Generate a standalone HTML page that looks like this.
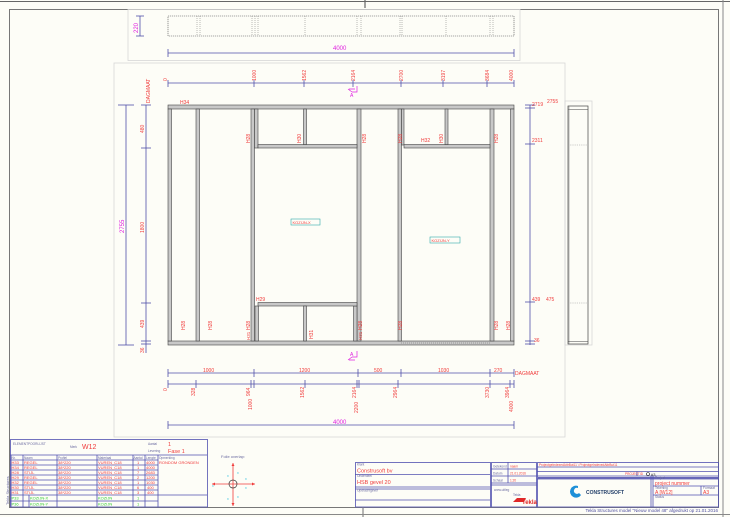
<!DOCTYPE html>
<html><head><meta charset="utf-8"><style>
html,body{margin:0;padding:0;background:#fdfdf7;}
svg{display:block;font-family:"Liberation Sans",sans-serif;}
.r{fill:#f03c3c;font-size:5px;}
.m{fill:#e020e0;font-size:6px;}
.d{stroke:#5050a8;stroke-width:0.8;fill:none;}
.t{stroke:#5050b0;stroke-width:0.8;fill:none;}
.st{fill:#c8c8c8;stroke:#444;stroke-width:0.6;}
.s{fill:#6a6aa0;font-size:3.2px;}
.g{fill:#3c3;font-size:4px;}
.rs{fill:#f03c3c;font-size:4px;}
</style></head><body>
<svg width="730" height="517" viewBox="0 0 730 517" xmlns="http://www.w3.org/2000/svg">
<rect width="730" height="517" fill="#fdfdf7"/>
<!-- outer frame -->
<line x1="0" y1="1.5" x2="730" y2="1.5" stroke="#666" stroke-width="1"/>
<line x1="365" y1="0" x2="365" y2="8" stroke="#666" stroke-width="1.2"/>
<rect x="9.5" y="9.5" width="709" height="498" fill="none" stroke="#777" stroke-width="1"/>
<line x1="0" y1="514.5" x2="730" y2="514.5" stroke="#888" stroke-width="1"/>
<line x1="363" y1="507" x2="363" y2="517" stroke="#888" stroke-width="1.2"/>
<line x1="723" y1="0" x2="723" y2="517" stroke="#888" stroke-width="1"/>
<!-- panels -->
<rect x="128" y="9.5" width="392" height="51" fill="none" stroke="#d6d6d6" stroke-width="0.8"/>
<rect x="114" y="63" width="451" height="374" fill="none" stroke="#d6d6d6" stroke-width="0.8"/>
<rect x="565" y="101" width="27" height="244" fill="none" stroke="#d6d6d6" stroke-width="0.8"/>

<!-- top view -->
<rect x="168" y="16" width="346" height="20" fill="none" stroke="#555" stroke-width="0.6" stroke-dasharray="1.2,0.8"/>
<g stroke="#777" stroke-width="0.5" stroke-dasharray="1,1">
<line x1="197" y1="16" x2="197" y2="36"/><line x1="200" y1="16" x2="200" y2="36"/>
<line x1="252" y1="16" x2="252" y2="36"/><line x1="255" y1="16" x2="255" y2="36"/><line x1="258" y1="16" x2="258" y2="36"/>
<line x1="305" y1="16" x2="305" y2="36"/><line x1="357" y1="16" x2="357" y2="36"/><line x1="361" y1="16" x2="361" y2="36"/>
<line x1="400" y1="16" x2="400" y2="36"/><line x1="402" y1="16" x2="402" y2="36"/><line x1="446" y1="16" x2="446" y2="36"/>
<line x1="490" y1="16" x2="490" y2="36"/><line x1="493" y1="16" x2="493" y2="36"/>
</g>
<g class="d"><line x1="140" y1="16" x2="140" y2="36"/><line x1="136" y1="16" x2="144" y2="16"/><line x1="136" y1="36" x2="144" y2="36"/>
<line x1="168" y1="53" x2="514" y2="53"/><line x1="168" y1="49" x2="168" y2="57"/><line x1="514" y1="49" x2="514" y2="57"/></g>
<text class="m" transform="translate(138,33) rotate(-90)">220</text>
<text class="m" x="333" y="50">4000</text>

<!-- top dims -->
<g class="d"><line x1="168" y1="83" x2="514" y2="83"/>
<line x1="168" y1="80" x2="168" y2="87"/><line x1="254" y1="80" x2="254" y2="87"/><line x1="304" y1="80" x2="304" y2="87"/><line x1="353" y1="80" x2="353" y2="87"/><line x1="401" y1="80" x2="401" y2="87"/><line x1="443" y1="80" x2="443" y2="87"/><line x1="487" y1="80" x2="487" y2="87"/><line x1="514" y1="80" x2="514" y2="87"/></g>
<g class="r">
<text transform="translate(167,81) rotate(-90)">0</text>
<text transform="translate(256,81) rotate(-90)">1000</text>
<text transform="translate(306,81) rotate(-90)">1562</text>
<text transform="translate(355,81) rotate(-90)">2164</text>
<text transform="translate(403,81) rotate(-90)">2700</text>
<text transform="translate(445,81) rotate(-90)">3197</text>
<text transform="translate(489,81) rotate(-90)">3684</text>
<text transform="translate(513,81) rotate(-90)">4000</text>
</g>
<path d="M357 86 L357 92 L352 92 M352 92 L348 89 M355 89 L349 89" stroke="#e020e0" stroke-width="0.7" fill="none"/>
<text class="m" x="350" y="97" style="font-size:5px">A</text>
<path d="M357 351 L357 357 L352 357 M352 357 L348 360 M355 360 L349 360" stroke="#e020e0" stroke-width="0.7" fill="none"/>
<text class="m" x="350" y="356" style="font-size:5px">A</text>

<!-- left dims -->
<g class="d"><line x1="126" y1="105" x2="126" y2="345"/><line x1="118" y1="105" x2="134" y2="105"/><line x1="118" y1="345" x2="134" y2="345"/>
<line x1="146" y1="105" x2="146" y2="353"/><line x1="141" y1="105" x2="151" y2="105"/><line x1="141" y1="148" x2="151" y2="148"/><line x1="141" y1="303" x2="151" y2="303"/><line x1="141" y1="341" x2="151" y2="341"/><line x1="141" y1="344" x2="151" y2="344"/></g>
<text class="m" transform="translate(124,233) rotate(-90)">2755</text>
<g class="r"><text transform="translate(150,103) rotate(-90)">DAGMAAT</text>
<text transform="translate(144,133) rotate(-90)">480</text>
<text transform="translate(144,233) rotate(-90)">1800</text>
<text transform="translate(144,328) rotate(-90)">439</text>
<text transform="translate(144,353) rotate(-90)">36</text></g>

<!-- right dims -->
<g class="d"><line x1="530" y1="105" x2="530" y2="345"/><line x1="525" y1="105" x2="535" y2="105"/><line x1="525" y1="108" x2="535" y2="108"/><line x1="525" y1="144" x2="535" y2="144"/><line x1="525" y1="302" x2="535" y2="302"/><line x1="525" y1="341" x2="535" y2="341"/><line x1="525" y1="344" x2="535" y2="344"/></g>
<g class="r"><text x="532" y="106">2719</text><text x="547" y="103">2755</text><text x="532" y="142">2311</text><text x="532" y="301">439</text><text x="546" y="301">475</text><text x="534" y="342">36</text></g>

<!-- frame members -->
<rect class="st" x="168" y="105" width="346" height="4"/>
<rect class="st" x="168" y="341" width="346" height="4"/>
<line x1="401" y1="343" x2="490" y2="343" stroke="#666" stroke-width="0.5" stroke-dasharray="1,1"/>
<g>
<rect class="st" x="168" y="109" width="3.5" height="232"/>
<rect class="st" x="196" y="109" width="3.5" height="232"/>
<rect class="st" x="251" y="109" width="3.5" height="232"/>
<rect class="st" x="254.5" y="109" width="3.5" height="39"/>
<rect class="st" x="255" y="306" width="3.5" height="35"/>
<rect class="st" x="357" y="109" width="4" height="232"/>
<rect class="st" x="353.5" y="306" width="3.5" height="35"/>
<rect class="st" x="398" y="109" width="3.5" height="232"/>
<rect class="st" x="401.5" y="109" width="2.5" height="36"/>
<rect class="st" x="490" y="109" width="4" height="232"/>
<rect class="st" x="510.5" y="109" width="3.5" height="232"/>
<rect class="st" x="258" y="144.5" width="99" height="3.5"/>
<rect class="st" x="404" y="144.5" width="86" height="3.5"/>
<rect class="st" x="258" y="302.5" width="99" height="3.5"/>
<rect class="st" x="303.5" y="109" width="3" height="35.5"/>
<rect class="st" x="445" y="109" width="3" height="35.5"/>
<rect class="st" x="303.5" y="306" width="3" height="35"/>
</g>
<g class="r">
<text x="180" y="104">H34</text>
<text x="256" y="301">H29</text>
<text x="421" y="142">H32</text>
<text transform="translate(185,330) rotate(-90)">H28</text>
<text transform="translate(212,330) rotate(-90)">H28</text>
<text transform="translate(250,330) rotate(-90)">H28</text>
<text transform="translate(250,340) rotate(-90)" style="font-size:4.5px">H31</text>
<text transform="translate(250,143) rotate(-90)">H28</text>
<text transform="translate(301,143) rotate(-90)">H30</text>
<text transform="translate(313,339) rotate(-90)">H31</text>
<text transform="translate(366,143) rotate(-90)">H28</text>
<text transform="translate(362,330) rotate(-90)">H28</text>
<text transform="translate(362,340) rotate(-90)" style="font-size:4.5px">H31</text>
<text transform="translate(402,143) rotate(-90)">H28</text>
<text transform="translate(402,330) rotate(-90)">H28</text>
<text transform="translate(443,143) rotate(-90)">H30</text>
<text transform="translate(498,143) rotate(-90)">H28</text>
<text transform="translate(498,330) rotate(-90)">H28</text>
<text transform="translate(510,330) rotate(-90)">H28</text>
</g>
<rect x="291" y="219" width="29" height="6" fill="none" stroke="#3aa" stroke-width="0.6"/>
<text class="rs" x="292.5" y="224">KOZIJN-X</text>
<rect x="430" y="237" width="30" height="6" fill="none" stroke="#3aa" stroke-width="0.6"/>
<text class="rs" x="431.5" y="242">KOZIJN-Y</text>

<!-- side view -->
<rect x="568" y="106" width="20" height="238" fill="none" stroke="#444" stroke-width="0.7"/>
<line x1="568" y1="109.5" x2="588" y2="109.5" stroke="#444" stroke-width="0.6"/>
<line x1="569" y1="106" x2="569" y2="344" stroke="#888" stroke-width="0.6"/>
<line x1="568" y1="145" x2="588" y2="145" stroke="#999" stroke-width="0.5" stroke-dasharray="1.2,1"/>
<line x1="568" y1="303" x2="588" y2="303" stroke="#999" stroke-width="0.5" stroke-dasharray="1.2,1"/>
<line x1="568" y1="341.5" x2="588" y2="341.5" stroke="#444" stroke-width="0.5"/>

<!-- bottom dims -->
<g class="d">
<line x1="168" y1="373" x2="514" y2="373"/>
<line x1="168" y1="369" x2="168" y2="377"/><line x1="254" y1="369" x2="254" y2="377"/><line x1="358" y1="369" x2="358" y2="377"/><line x1="401" y1="369" x2="401" y2="377"/><line x1="490" y1="369" x2="490" y2="377"/><line x1="514" y1="369" x2="514" y2="377"/>
<line x1="168" y1="384" x2="514" y2="384"/>
<line x1="168" y1="380" x2="168" y2="388"/><line x1="196" y1="380" x2="196" y2="388"/><line x1="251" y1="380" x2="251" y2="388"/><line x1="254" y1="380" x2="254" y2="388"/><line x1="305" y1="380" x2="305" y2="388"/><line x1="357" y1="380" x2="357" y2="388"/><line x1="359" y1="380" x2="359" y2="388"/><line x1="398" y1="380" x2="398" y2="388"/><line x1="490" y1="380" x2="490" y2="388"/><line x1="510" y1="380" x2="510" y2="388"/><line x1="514" y1="380" x2="514" y2="388"/>
<line x1="168" y1="425" x2="514" y2="425"/><line x1="168" y1="421" x2="168" y2="429"/><line x1="514" y1="421" x2="514" y2="429"/>
</g>
<g class="r">
<text x="203" y="372">1000</text><text x="299" y="372">1200</text><text x="374" y="372">500</text><text x="438" y="372">1030</text><text x="494" y="372">270</text><text x="515" y="375">DAGMAAT</text>
<text transform="translate(167,391) rotate(-90)">0</text>
<text transform="translate(195,396) rotate(-90)">328</text>
<text transform="translate(250,396) rotate(-90)">964</text>
<text transform="translate(252,410) rotate(-90)">1000</text>
<text transform="translate(304,398) rotate(-90)">1562</text>
<text transform="translate(356,398) rotate(-90)">2164</text>
<text transform="translate(358,413) rotate(-90)">2200</text>
<text transform="translate(397,398) rotate(-90)">2964</text>
<text transform="translate(489,398) rotate(-90)">3730</text>
<text transform="translate(509,398) rotate(-90)">3964</text>
<text transform="translate(513,412) rotate(-90)">4000</text>
</g>
<text class="m" x="333" y="424">4000</text>

<!-- element table -->
<g class="t">
<rect x="10.5" y="439.5" width="197" height="67.5"/>
<line x1="10" y1="455" x2="207" y2="455"/>
<line x1="10" y1="460" x2="158" y2="460"/><line x1="10" y1="465" x2="158" y2="465"/><line x1="10" y1="470" x2="158" y2="470"/><line x1="10" y1="475" x2="158" y2="475"/><line x1="10" y1="480" x2="158" y2="480"/><line x1="10" y1="485" x2="158" y2="485"/><line x1="10" y1="490" x2="158" y2="490"/><line x1="10" y1="495" x2="207" y2="495"/><line x1="10" y1="501" x2="158" y2="501"/>
<line x1="11" y1="455" x2="11" y2="507"/><line x1="23" y1="455" x2="23" y2="507"/><line x1="29" y1="495" x2="29" y2="507"/><line x1="57" y1="455" x2="57" y2="507"/><line x1="97" y1="455" x2="97" y2="507"/><line x1="133" y1="455" x2="133" y2="507"/><line x1="145" y1="455" x2="145" y2="507"/><line x1="158" y1="455" x2="158" y2="507"/>
</g>
<text class="s" x="13" y="445">ELEMENTPOORLIJST</text>
<text class="s" x="70" y="448">Merk</text>
<text x="82" y="449" fill="#f03c3c" style="font-size:7px">W12</text>
<text class="s" x="148" y="445">Aantal</text><text x="168" y="446" fill="#f03c3c" style="font-size:5.5px">1</text>
<text class="s" x="148" y="452">Levering</text><text x="168" y="453" fill="#f03c3c" style="font-size:5.5px">Fase 1</text>
<g class="s"><text x="11.5" y="459">Nr.</text><text x="24" y="459">Naam</text><text x="58" y="459">Profiel</text><text x="98" y="459">Materiaal</text><text x="133.5" y="459">Aantal</text><text x="146" y="459">Lengte</text><text x="159" y="459">Opmerking</text></g>
<g class="rs">
<text x="11.5" y="464">H33</text><text x="24" y="464">REGEL</text><text x="58" y="464">38*220</text><text x="98" y="464">VUREN_C18</text><text x="137" y="464">1</text><text x="146" y="464">4000</text><text x="159" y="464">RONDOM GRONDEN</text>
<text x="11.5" y="469">H34</text><text x="24" y="469">REGEL</text><text x="58" y="469">38*220</text><text x="98" y="469">VUREN_C18</text><text x="137" y="469">1</text><text x="146" y="469">4000</text>
<text x="11.5" y="474">H28</text><text x="24" y="474">STIJL</text><text x="58" y="474">38*220</text><text x="98" y="474">VUREN_C18</text><text x="137" y="474">7</text><text x="146" y="474">2683</text>
<text x="11.5" y="479">H29</text><text x="24" y="479">REGEL</text><text x="58" y="479">38*220</text><text x="98" y="479">VUREN_C18</text><text x="137" y="479">2</text><text x="146" y="479">1200</text>
<text x="11.5" y="484">H32</text><text x="24" y="484">REGEL</text><text x="58" y="484">38*220</text><text x="98" y="484">VUREN_C18</text><text x="137" y="484">1</text><text x="146" y="484">1030</text>
<text x="11.5" y="489">H30</text><text x="24" y="489">STIJL</text><text x="58" y="489">38*220</text><text x="98" y="489">VUREN_C18</text><text x="137" y="489">6</text><text x="147" y="489">400</text>
<text x="11.5" y="494">H31</text><text x="24" y="494">STIJL</text><text x="58" y="494">38*220</text><text x="98" y="494">VUREN_C18</text><text x="137" y="494">3</text><text x="147" y="494">400</text>
</g>
<g class="g"><text x="11.5" y="499.5">P33</text><text x="30" y="499.5">KOZIJN-X</text><text x="98" y="499.5">KOZIJN</text><text x="137" y="499.5">1</text>
<text x="11.5" y="505.5">P36</text><text x="30" y="505.5">KOZIJN-Y</text><text x="98" y="505.5">KOZIJN</text><text x="137" y="505.5">1</text></g>
<text transform="translate(9,505) rotate(-90)" class="s" style="font-size:4px">Tekla Structures</text>

<!-- folie overlap -->
<text class="s" x="221" y="458" style="font-size:4px">Folie overlap:</text>
<g stroke="#f03c3c" stroke-width="0.8" fill="#f03c3c">
<line x1="212" y1="484" x2="255" y2="484"/><line x1="233" y1="463" x2="233" y2="506"/>
<path d="M212 484 l3 -1.5 v3z M255 484 l-3 -1.5 v3z M233 463 l-1.5 3 h3z M233 506 l-1.5 -3 h3z" stroke="none"/>
</g>
<circle cx="233" cy="484" r="4" fill="none" stroke="#333" stroke-width="0.7"/>
<g fill="#30c0e0" style="font-size:3.5px"><text x="227" y="477">x</text><text x="237" y="474">x</text><text x="245" y="480">x</text><text x="212" y="487">x</text><text x="245" y="489">x</text><text x="227" y="500">x</text><text x="237" y="498">x</text></g>

<!-- title block -->
<g class="t">
<rect x="355.5" y="462.5" width="135" height="44.5"/>
<line x1="355" y1="474.5" x2="490" y2="474.5"/><line x1="355" y1="487" x2="490" y2="487"/><line x1="355" y1="489" x2="490" y2="489"/><line x1="355" y1="500" x2="490" y2="500"/>
<rect x="491.5" y="462.5" width="45" height="44.5"/>
<line x1="491" y1="469" x2="537" y2="469"/><line x1="491" y1="476" x2="537" y2="476"/><line x1="491" y1="483" x2="537" y2="483"/><line x1="491" y1="485" x2="537" y2="485"/>
<line x1="508" y1="462" x2="508" y2="483"/>
<rect x="537.5" y="462.5" width="181" height="44.5"/>
<line x1="537" y1="467" x2="718" y2="467"/><line x1="537" y1="471.5" x2="718" y2="471.5"/><line x1="537" y1="476" x2="718" y2="476"/><line x1="537" y1="479" x2="718" y2="479"/>
<line x1="538" y1="477.8" x2="718" y2="477.8" stroke-width="1.4"/>
<line x1="653" y1="476" x2="653" y2="507"/><line x1="651" y1="476" x2="651" y2="507"/>
<line x1="637" y1="471.5" x2="637" y2="476"/>
<line x1="653" y1="486" x2="718" y2="486"/><line x1="653" y1="495" x2="718" y2="495"/><line x1="701" y1="486" x2="701" y2="495"/>
</g>
<g class="s"><text x="357" y="465.5">Klant</text><text x="357" y="477">Onderdeel</text><text x="357" y="491.5">Opdrachtgever</text>
<text x="493" y="467.5">Getekend</text><text x="493" y="474.5">Datum</text><text x="493" y="481.5">Schaal</text>
<text x="655" y="479">Project</text><text x="655" y="489">Tekening</text><text x="703" y="489">Formaat</text><text x="655" y="498">Status</text>
<text x="494" y="491">www.uitleg</text><text x="513" y="496">Tekla</text></g>
<text x="357" y="472.5" fill="#f03c3c" style="font-size:5.5px">Construsoft bv</text>
<text x="357" y="484" fill="#f03c3c" style="font-size:5.5px">HSB gevel 20</text>
<g fill="#f03c3c" style="font-size:3.2px"><text x="510" y="467.5">naam</text><text x="510" y="474.5">21.01.2016</text><text x="510" y="481.5">1:20</text>
<text x="539" y="466">ProjectgeIndexedAttrBut11 \ ProjectgeIndexedAttrBut11</text><text x="625" y="475">PROJECTID</text></g>
<text x="655" y="485" fill="#f03c3c" style="font-size:5px">project nummer</text>
<text x="655" y="494" fill="#f03c3c" style="font-size:5px">A  [W12]</text>
<text x="703" y="494" fill="#f03c3c" style="font-size:5px">A3</text>
<circle cx="648" cy="474" r="1.5" fill="none" stroke="#222" stroke-width="0.6"/><text x="651" y="476" fill="#222" style="font-size:4px">#3</text>
<path d="M513 502 l4 -4 h9 l-2 4z" fill="#e02828"/>
<text x="522" y="504" fill="#e02828" style="font-size:6px;font-weight:bold">Tekla</text>
<path d="M578 486 a6 6 0 1 0 3 9 l-2 -2 a3 3 0 1 1 -1 -5z" fill="#1e90d8"/>
<text x="586" y="494" fill="#24406a" style="font-size:5px;font-weight:bold">CONSTRUSOFT</text>
<text x="718" y="512" text-anchor="end" fill="#5050a0" style="font-size:4.5px">Tekla Structures model "Nieuw model 48" afgedrukt op 21.01.2016</text>
</svg>
</body></html>
